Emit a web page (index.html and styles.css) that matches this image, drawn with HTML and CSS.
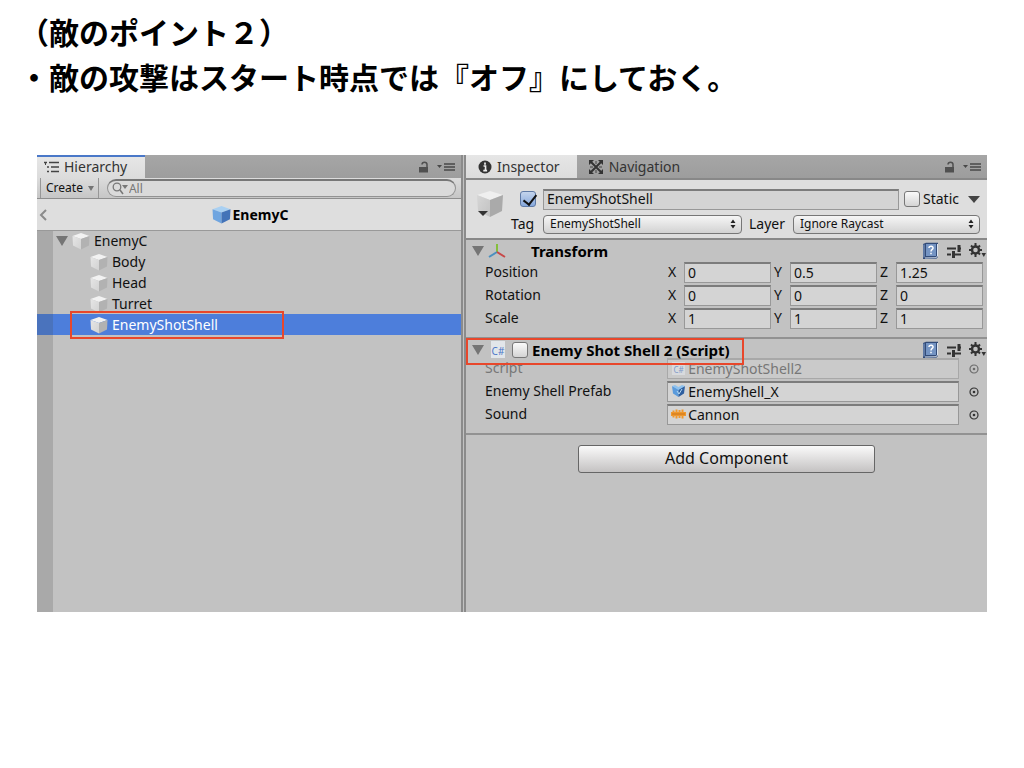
FILE: index.html
```html
<!DOCTYPE html>
<html lang="ja">
<head>
<meta charset="utf-8">
<title>敵のポイント２</title>
<link rel="stylesheet" href="styles.css">
</head>
<body>
<svg class="defs" width="0" height="0" aria-hidden="true">
  <linearGradient id="gw" x1="0" y1="0" x2="1" y2="1"><stop offset="0" stop-color="#e6e6e6"/><stop offset="1" stop-color="#d2d2d2"/></linearGradient>
  <linearGradient id="gl" x1="0" y1="0" x2="1" y2="1"><stop offset="0" stop-color="#d6d6d6"/><stop offset="1" stop-color="#c2c2c2"/></linearGradient>
  <symbol id="cube" viewBox="0 0 18 18"><path d="M9 1 17.500 4 9 7 .5 4Z" fill="#f2f2f2"/><path d="M.5 4 9 7V17.500L1 13.500Z" fill="url(#gw)"/><path d="M17.500 4 9 7V17.500l8-4Z" fill="#b2b2b2"/></symbol>
  <symbol id="cube-blue" viewBox="0 0 18 18"><path d="M9 1 17.500 4 9 7 .5 4Z" fill="#a9d0f2"/><path d="M.5 4 9 7V17.500L1 13.500Z" fill="#6fa5e0"/><path d="M17.500 4 9 7V17.500l8-4Z" fill="#4373b8"/></symbol>
  <symbol id="lock" viewBox="0 0 10 12"><path d="M0 6h9v5.500H0Z" fill="#505050"/><path d="M3 3.500C3 .5 8 .5 8 3.500V6" fill="none" stroke="#505050" stroke-width="1.500"/></symbol>
  <symbol id="menu" viewBox="0 0 18 10"><path d="M0 3h5L2.500 6Z" fill="#484848"/><path d="M7 2h11M7 5h11M7 8h11" stroke="#484848" stroke-width="1.300"/></symbol>
  <symbol id="down" viewBox="0 0 12 10"><path d="M0 0h12L6 10Z" fill="#757575"/></symbol>
  <symbol id="updown" viewBox="0 0 6 10"><path d="M.5 4 3 .5 5.500 4ZM.5 6h5L3 9.500Z" fill="#222"/></symbol>
  <symbol id="book" viewBox="0 0 17 18"><path d="M1 2 4 .8H16V15l-2 2H1Z" fill="#324b78"/><path d="M3 16 14 15.800 15.500 14V2" fill="none" stroke="#dce5f0"/><path d="M4 2H14V14H4Z" fill="#7494c3"/><path d="M2 2.500V15.500" stroke="#8ca8d0"/><path d="M7 6C7 3.300 11.500 3.800 11 6.300 10.800 7.500 9 7.500 9 9.500M9 10.800V12.300" fill="none" stroke="#fff" stroke-width="1.500"/></symbol>
  <symbol id="preset" viewBox="0 0 14 14"><path d="M0 4.500H9M12 4.500h2M0 10.500H4M8 10.500h6" stroke="#333" stroke-width="2"/><path d="M12 1V8M6.500 7v7" stroke="#333" stroke-width="3"/></symbol>
  <symbol id="gear" viewBox="0 0 17 15"><circle cx="6.500" cy="7" r="3.500" fill="none" stroke="#333" stroke-width="2.400"/><path d="M6.500 0V3M6.500 11v3M0 7H3M10 7h3M2 2.500 4 4.500M9 9.500l2 2M2 11.500l2-2M9 4.500l2-2" stroke="#333" stroke-width="2"/><path d="M12.500 10H17l-2.200 4Z" fill="#333"/></symbol>
  <symbol id="pick" viewBox="0 0 10 10"><circle cx="5" cy="5" r="4" fill="none" stroke="#333" stroke-width="1.200"/><circle cx="5" cy="5" r="1.300" fill="#333"/></symbol>
</svg>

<header class="notes">
  <p>（敵のポイント２）</p>
  <p>・敵の攻撃はスタート時点では『オフ』にしておく。</p>
</header>

<main class="editor">
  <section class="hierarchy">
    <div class="tabs">
      <button class="tab active focused">
        <svg width="16" height="12" viewBox="0 0 16 12"><path d="M0 1.500H3M5 1.500H15M3 6H5M7 6h8M3 10.500h2M7 10.500h8" stroke="#444" stroke-width="1.500"/><path d="M1.500 2V4" stroke="#444"/></svg>Hierarchy</button>
      <div class="tools"><svg width="10" height="12"><use href="#lock"/></svg><svg width="18" height="10"><use href="#menu"/></svg></div>
    </div>
    <div class="toolbar">
      <button class="create">Create <svg width="6" height="5"><use href="#down" width="6" height="5"/></svg></button>
      <label class="search">
        <svg width="16" height="13" viewBox="0 0 16 13"><circle cx="5" cy="5" r="3.800" fill="none" stroke="#777" stroke-width="1.300"/><path d="M8 8 11 12" stroke="#777" stroke-width="1.500"/><path d="M10 3h6L13 7Z" fill="#777"/></svg>
        <input type="text" placeholder="All" aria-label="Search">
      </label>
    </div>
    <div class="crumb">
      <button class="back" aria-label="Back"><svg width="8" height="12" viewBox="0 0 8 12"><path d="M7 1 2 6l5 5" fill="none" stroke="#8a8a8a" stroke-width="2"/></svg></button>
      <span class="crumb-name"><svg width="19" height="19"><use href="#cube-blue"/></svg>EnemyC</span>
    </div>
    <ul class="tree">
      <li class="root"><svg class="fold" width="12" height="10"><use href="#down"/></svg><svg width="18" height="18"><use href="#cube"/></svg>EnemyC</li>
      <li><svg width="18" height="18"><use href="#cube"/></svg>Body</li>
      <li><svg width="18" height="18"><use href="#cube"/></svg>Head</li>
      <li><svg width="18" height="18"><use href="#cube"/></svg>Turret</li>
      <li class="selected"><svg width="18" height="18"><use href="#cube"/></svg>EnemyShotShell<span class="mark mark-row"></span></li>
    </ul>
  </section>

  <section class="inspector">
    <div class="tabs">
      <button class="tab active info">
        <svg width="14" height="14" viewBox="0 0 14 14"><circle cx="7" cy="7" r="6.500" fill="#333"/><path d="M7 2.500v2.200M5.500 6h2v4.500M5.300 10.700h3.800" stroke="#eee" stroke-width="1.700"/></svg>Inspector</button>
      <button class="tab nav">
        <svg width="14" height="14" viewBox="0 0 14 14"><path d="M2 2 12 12M12 2 2 12" stroke="#333" stroke-width="2"/><path d="M0 0h5L0 5ZM14 0v5L9 0ZM0 14V9l5 5ZM14 14H9l5-5Z" fill="#333"/><path d="M7 1v3M7 10v3M1 7h3M10 7h3" stroke="#444"/></svg>Navigation</button>
      <div class="tools"><svg width="10" height="12"><use href="#lock"/></svg><svg width="18" height="10"><use href="#menu"/></svg></div>
    </div>

    <div class="object">
      <svg class="object-icon" width="28" height="28" viewBox="0 0 28 28"><path d="M14 1 27 5 14 10 1 5Z" fill="#efefef"/><path d="M1 5 14 10V27L2 21Z" fill="url(#gl)"/><path d="M27 5 14 10V27l12-6Z" fill="#aaa"/><path d="M2 21H12L7 26Z" fill="#333"/></svg>
      <div class="object-form">
        <div class="object-row name-row">
          <input class="check" type="checkbox" checked aria-label="Active">
          <input class="field" type="text" value="EnemyShotShell" aria-label="Name">
          <input class="check" type="checkbox" id="static"><label for="static">Static</label>
          <svg class="static-arrow" width="12" height="7" viewBox="0 0 12 7"><path d="M0 0h12L6 7Z" fill="#444"/></svg>
        </div>
        <div class="object-row">
          <label class="tag" for="tag">Tag</label>
          <span class="select tag-select"><select id="tag"><option>EnemyShotShell</option></select><svg width="6" height="10"><use href="#updown"/></svg></span>
          <label class="layer" for="layer">Layer</label>
          <span class="select layer-select"><select id="layer"><option>Ignore Raycast</option></select><svg width="6" height="10"><use href="#updown"/></svg></span>
        </div>
      </div>
    </div>

    <section class="component">
      <div class="component-head">
        <svg class="fold" width="12" height="10"><use href="#down"/></svg>
        <svg class="axes" width="18" height="16" viewBox="0 0 18 16"><path d="M9 10V1" stroke="#85bf3c" stroke-width="2"/><path d="M9 9 1 14" stroke="#4a90c0" stroke-width="2"/><path d="m9 9 8 5" stroke="#c84848" stroke-width="2"/></svg>
        <h2>Transform</h2>
        <div class="head-tools"><svg width="17" height="18"><use href="#book"/></svg><svg width="14" height="14"><use href="#preset"/></svg><svg width="17" height="15"><use href="#gear"/></svg></div>
      </div>
      <div class="row"><span class="label">Position</span><div class="vector"><label><span>X</span><input class="field" value="0"></label><label><span>Y</span><input class="field" value="0.5"></label><label><span>Z</span><input class="field" value="1.25"></label></div></div>
      <div class="row"><span class="label">Rotation</span><div class="vector"><label><span>X</span><input class="field" value="0"></label><label><span>Y</span><input class="field" value="0"></label><label><span>Z</span><input class="field" value="0"></label></div></div>
      <div class="row"><span class="label">Scale</span><div class="vector"><label><span>X</span><input class="field" value="1"></label><label><span>Y</span><input class="field" value="1"></label><label><span>Z</span><input class="field" value="1"></label></div></div>
    </section>

    <section class="component script">
      <div class="component-head">
        <svg class="fold" width="12" height="10"><use href="#down"/></svg>
        <span class="cs">C#</span>
        <input class="check" type="checkbox" id="enabled">
        <h2><label for="enabled">Enemy Shot Shell 2 (Script)</label></h2>
        <div class="head-tools"><svg width="17" height="18"><use href="#book"/></svg><svg width="14" height="14"><use href="#preset"/></svg><svg width="17" height="15"><use href="#gear"/></svg></div>
        <span class="mark mark-head"></span>
      </div>
      <div class="row disabled"><span class="label">Script</span><div class="reference"><button class="field asset" disabled><span class="cs small">C#</span>EnemyShotShell2</button><svg width="10" height="10"><use href="#pick"/></svg></div></div>
      <div class="row"><span class="label">Enemy Shell Prefab</span><div class="reference"><button class="field asset"><svg width="15" height="14" viewBox="0 0 15 14"><path d="M1 2 7.500 5V13L2 9.500Z" fill="#5b9bdc"/><path d="M14 2 7.500 5v8L13 9.500Z" fill="#2f5f9f"/><path d="M1 2 4 1 7.500 3 11 1l3 1-6.500 4Z" fill="#8fc2ee"/><path d="m6 7 2 3 3-5" fill="none" stroke="#b8dcf5"/></svg>EnemyShell_X</button><svg width="10" height="10"><use href="#pick"/></svg></div></div>
      <div class="row"><span class="label">Sound</span><div class="reference"><button class="field asset"><svg width="15" height="14" viewBox="0 0 15 14"><path d="M0 7h15" stroke="#f0982c" stroke-width="4"/><path d="M2.500 3.500v7M5.500 2.500v9M8.500 3v8M11.500 2.500v9M13.500 5v4" stroke="#f0982c" stroke-width="2"/><path d="M1 7h13" stroke="#c8741c"/></svg>Cannon</button><svg width="10" height="10"><use href="#pick"/></svg></div></div>
    </section>

    <button class="add">Add Component</button>
  </section>
</main>
</body>
</html>
```
FILE: styles.css
```css
* { box-sizing: border-box; }
body {
  margin: 0;
  background: #fff;
  color: #111;
  font: 14px/20px "Noto Sans", "Open Sans", sans-serif;
}
button, input, select { font: inherit; color: inherit; }
button { border: 0; padding: 0; background: none; }
svg { flex: none; display: block; }
h2, p, ul { margin: 0; padding: 0; }
.defs { position: absolute; }

.notes {
  padding: 9px 19px 0;
  color: #000;
  font: bold 30px/45px "Noto Sans CJK JP", sans-serif;
}
.notes p { white-space: nowrap; }

.editor {
  display: flex;
  margin: 56px 37px 0;
  min-height: 457px;
  background: #c2c2c2;
}
.hierarchy { flex: 424 1 0; min-width: 0; display: flex; flex-direction: column; }
.inspector {
  flex: 521 1 0;
  min-width: 0;
  border-left: 5px double #8b8b8b;
}

.tabs {
  display: flex;
  height: 23px;
  background: linear-gradient(#a6a6a6, #9d9d9d);
}
.tab {
  display: flex;
  align-items: center;
  gap: 4px;
  padding: 0 18px 0 7px;
  color: #333;
}
.tab.active { background: linear-gradient(#e6e6e6, #dcdcdc); }
.tab.focused { padding-bottom: 2px; border-top: 2px solid #4a78c8; }
.tab.info { padding: 0 17px 0 12px; gap: 5px; }
.tab.nav { padding-left: 12px; gap: 6px; }
.tools { display: flex; align-items: center; gap: 8px; margin-left: auto; padding-right: 6px; }

.toolbar {
  display: flex;
  height: 21px;
  border-bottom: 1px solid #8e8e8e;
  background: linear-gradient(#dcdcdc, #c6c6c6);
}
.create {
  display: flex;
  align-items: center;
  gap: 5px;
  margin-left: 3px;
  padding: 0 4px 0 5px;
  border: solid #979797;
  border-width: 0 1px;
  font-size: 12px;
}
.search {
  flex: 1;
  display: flex;
  align-items: center;
  gap: 1px;
  height: 18px;
  margin: 1px 5px 0 8px;
  padding-left: 4px;
  border: 1px solid #929292;
  border-top: 2px solid #777;
  border-radius: 9px;
  background: #dadada;
}
.search input {
  flex: 1;
  min-width: 0;
  height: 15px;
  padding: 0;
  border: 0;
  background: none;
  font-size: 12px;
}
.search input::placeholder { color: #777; opacity: 1; }

.crumb {
  display: flex;
  align-items: center;
  height: 32px;
  border-bottom: 1px solid #999;
  background: #dedede;
}
.back { width: 12px; padding-left: 2px; }
.crumb-name {
  flex: 1;
  display: flex;
  justify-content: center;
  align-items: center;
  gap: 2px;
  padding-right: 10px;
  color: #000;
  font-weight: bold;
}

.tree {
  flex: 1;
  list-style: none;
  background: linear-gradient(90deg, #a9a9a9 16px, #c2c2c2 16px);
}
.tree li {
  position: relative;
  display: flex;
  align-items: center;
  gap: 4px;
  height: 21px;
  padding-left: 53px;
}
.tree .root { padding-left: 19px; height: 20px; }
.tree .selected {
  background: linear-gradient(90deg, #4a73bd 16px, #4d7edb 16px);
  color: #fff;
}
.mark { position: absolute; border: 2px solid #e8472b; pointer-events: none; }
.mark-row { left: 33px; top: -3px; width: 214px; height: 28px; }
.mark-head { left: 0; top: -1px; width: 278px; height: 27px; }

.object {
  display: flex;
  align-items: flex-start;
  gap: 7px;
  padding: 8px 7px 3px 10px;
  border: solid #888;
  border-width: 2px 0;
  background: #dedede;
}
.object-icon { margin-top: 2px; }
.object-form { flex: 1; min-width: 0; display: grid; gap: 3px; }
.object-row { display: flex; align-items: center; height: 22px; }
.name-row { padding-left: 9px; }
.name-row .field { margin: 0 5px 0 7px; }
.name-row label { margin: 0 9px 0 3px; }
.static-arrow { margin-left: auto; }
.check {
  appearance: none;
  flex: none;
  width: 16px;
  height: 16px;
  margin: 0;
  border: 1px solid #777;
  border-radius: 3px;
  background: linear-gradient(#fafafa, #d4d4d4);
}
.check:checked { position: relative; background: linear-gradient(#c4d4ec, #86a8dc); border-color: #5e79a5; }
.check:checked::after {
  content: "";
  position: absolute;
  left: 5px;
  top: 0;
  width: 6px;
  height: 11px;
  border: solid #111;
  border-width: 0 2px 2px 0;
  transform: rotate(38deg);
}
.field {
  flex: 1;
  min-width: 0;
  width: 0;
  height: 21px;
  padding: 0 3px 2px;
  border: 1px solid #989898;
  border-top: 2px solid #7c7c7c;
  background: #d4d4d4;
}
.tag { width: 32px; }
.layer { width: 44px; margin-left: 7px; }
.select { position: relative; display: flex; min-width: 0; }
.tag-select { flex: 199 1 0; }
.layer-select { flex: 187 1 0; }
.select select {
  appearance: none;
  width: 100%;
  height: 19px;
  padding: 0 6px;
  border: 1px solid #777;
  border-radius: 4px;
  background: linear-gradient(#f6f6f6, #d2d2d2);
  font-size: 12px;
  line-height: 16px;
}
.select svg { position: absolute; right: 6px; top: 4px; pointer-events: none; }

.component { padding-bottom: 7px; border-bottom: 2px solid #929292; }
.component-head {
  position: relative;
  display: flex;
  align-items: center;
  height: 21px;
  padding-left: 6px;
}
.component-head h2 { margin-left: 25px; color: #000; font: bold 15px/20px "Noto Sans", sans-serif; }
.axes { margin-left: 4px; }
.head-tools { display: flex; align-items: center; gap: 8px; margin-left: auto; padding-right: 1px; }
.row { display: flex; align-items: center; height: 23px; padding: 0 4px 0 19px; }
.label { flex: 183 1 0; padding-bottom: 2px; }
.vector { flex: 315 1 0; display: flex; gap: 3px; min-width: 0; }
.vector label { flex: 1; min-width: 0; display: flex; align-items: center; }
.vector span { padding-bottom: 2px; }
.vector .field { flex: none; width: calc(100% - 16px); margin-left: auto; }
.reference { flex: 315 1 0; display: flex; align-items: center; gap: 10px; padding: 0 4px 0 1px; min-width: 0; }
.asset { display: flex; align-items: center; gap: 2px; text-align: left; line-height: 17px; }
.disabled { color: #777; }
.disabled .field { border-color: #a8a8a8; background: #cacaca; color: #777; }
.disabled svg { opacity: .6; }

.script .component-head h2 { margin-left: 4px; }
.script .row:nth-child(2) { margin-top: -3px; }
.script .mark { z-index: 1; }
.cs {
  width: 14px;
  height: 17px;
  margin: 0 7px;
  background: #e2e6ea;
  color: #4c78c8;
  font-size: 10px;
  line-height: 20px;
  text-align: center;
}
.cs.small { width: 13px; height: 13px; margin: 0 1px; font-size: 8px; line-height: 15px; opacity: .6; }

.add {
  display: block;
  width: 57%;
  height: 28px;
  margin: 10px auto 0;
  padding-bottom: 2px;
  border: 1px solid #666;
  border-radius: 3px;
  background: linear-gradient(#fafafa, #c4c2c2);
  font-size: 16px;
}
```
